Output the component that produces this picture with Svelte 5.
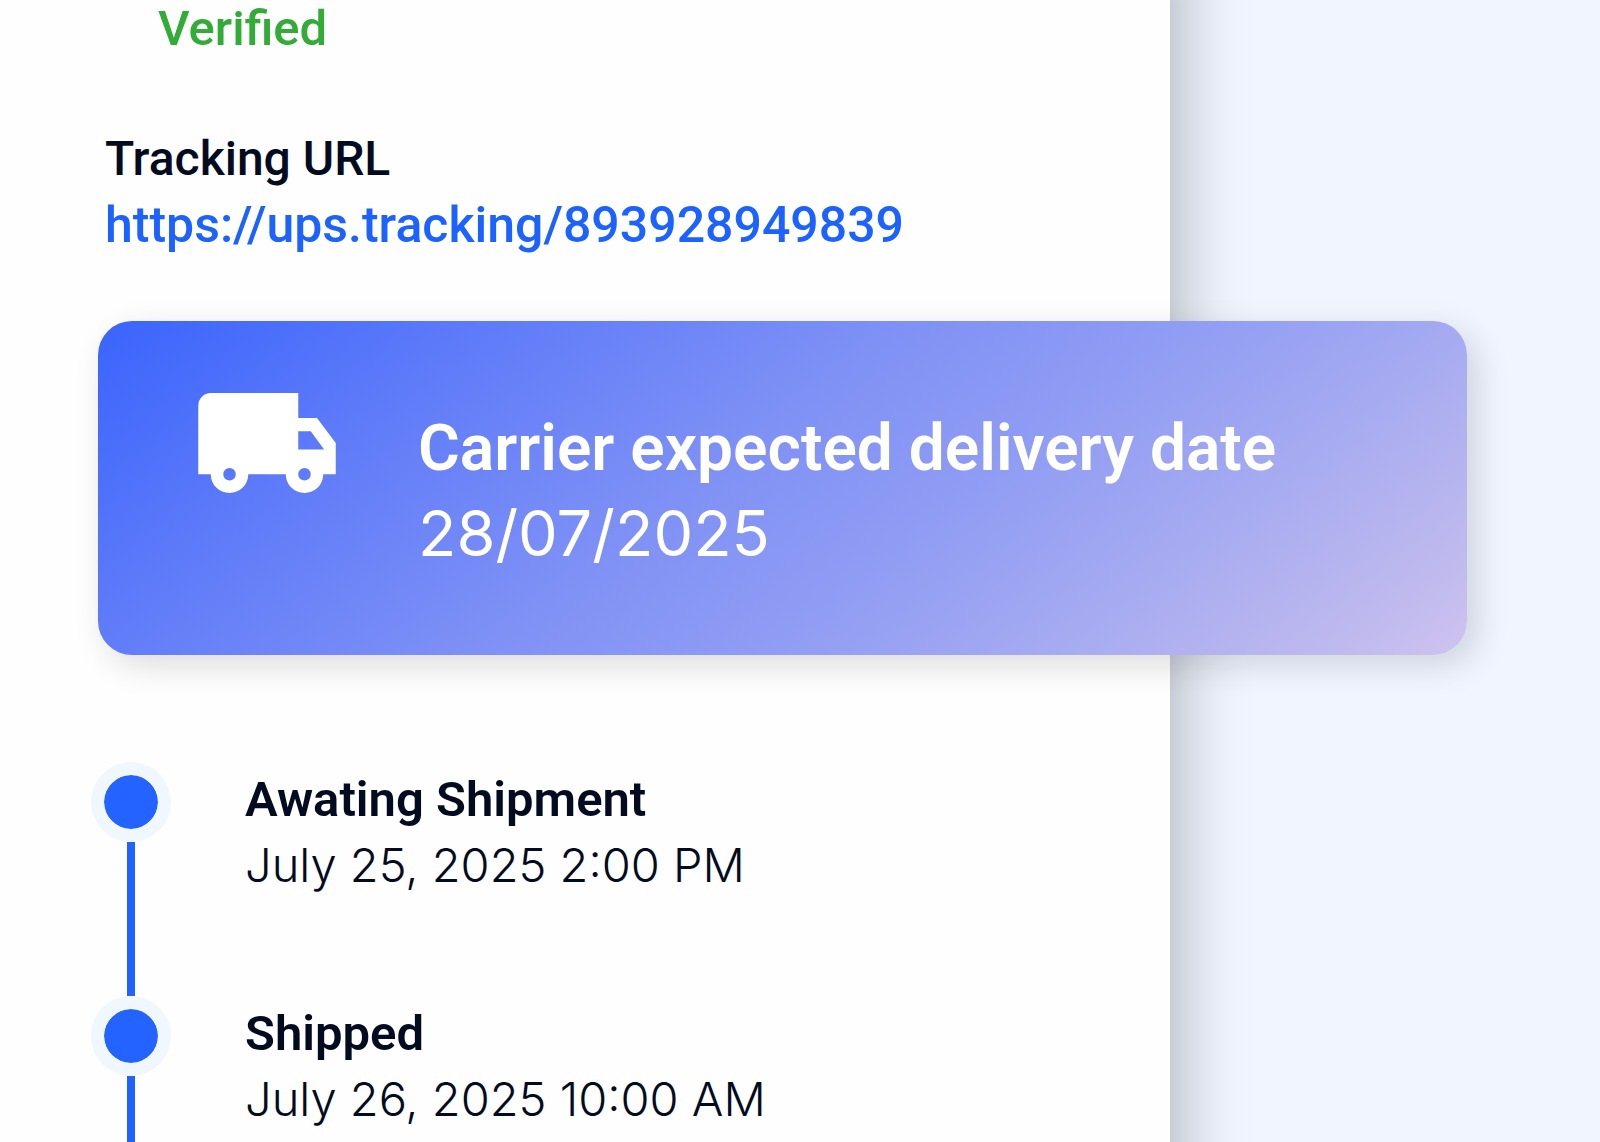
<script>
  const trackingUrl = 'https://ups.tracking/893928949839';
  const events = [
    { title: 'Awating Shipment', date: 'July 25, 2025 2:00 PM' },
    { title: 'Shipped', date: 'July 26, 2025 10:00 AM' }
  ];
</script>

<div class="page">
  <main class="panel">
    <p class="status">Verified</p>

    <section class="tracking">
      <h2>Tracking URL</h2>
      <a href={trackingUrl}>{trackingUrl}</a>
    </section>

    <section class="delivery">
      <svg class="truck" viewBox="1 4 22 16" aria-hidden="true">
        <path
          fill="currentColor"
          fill-rule="evenodd"
          d="M3 4h14v4h3l3 4v5h-2a3 3 0 0 1-6 0H9a3 3 0 0 1-6 0H1V6a2 2 0 0 1 2-2zM17 10.100v2.950h4.150L19 10.100zM6 16a1 1 0 1 0 0 2 1 1 0 0 0 0-2zM18 16a1 1 0 1 0 0 2 1 1 0 0 0 0-2z"
        />
      </svg>
      <div class="expected">
        <h1>Carrier expected delivery date</h1>
        <p>28/07/2025</p>
      </div>
    </section>

    <ol class="timeline">
      {#each events as event}
        <li>
          <div class="rail">
            <span class="dot"></span>
            <span class="line"></span>
          </div>
          <div class="event">
            <h3>{event.title}</h3>
            <p>{event.date}</p>
          </div>
        </li>
      {/each}
    </ol>
  </main>
</div>

<style>
  :global(body) {
    margin: 0;
    background: #f0f5ff;
  }

  .page {
    display: flex;
    height: 100vh;
    overflow: hidden;
    padding-right: 430px;
    box-sizing: border-box;
    background: #f0f5ff;
    color: #020b20;
    font-family: Roboto, 'Liberation Sans', sans-serif;
    font-size: 49px;
    line-height: 65px;
  }

  /* The panel runs past the top and bottom edges so its shadow stays even. */
  .panel {
    flex: 1;
    min-width: 0;
    box-sizing: border-box;
    height: max-content;
    min-height: calc(100% + 160px);
    margin-top: -80px;
    padding-top: 76px;
    background: #fefefe;
    box-shadow: 0 0 72px rgb(0 0 0 / 33%);
  }

  h1,
  h2,
  h3,
  p {
    margin: 0;
    font-size: inherit;
  }

  .status {
    padding-left: 158px;
    color: #32ab37;
    font-weight: 500;
  }

  .tracking {
    margin-top: 65px;
    padding-left: 105px;
    line-height: 66px;
  }

  h2 {
    font-weight: 500;
  }

  .tracking h2 {
    font-size: 48px;
  }

  .tracking a {
    display: block;
    color: #1b62ff;
    font-size: 50px;
    font-weight: 500;
    text-decoration: none;
  }

  .delivery {
    position: relative;
    display: flex;
    gap: 82px;
    box-sizing: border-box;
    min-height: 334px;
    margin: 63px -297px 0 98px;
    padding: 72px 100px;
    border-radius: 34px;
    background: linear-gradient(142deg, #3a64fd 0%, #5d7af9 21%, #7f91f5 45%, #8f9cf4 60%, #a5aaf1 76%, #c0baee 93%, #cfc4f0 100%);
    box-shadow: 10px 10px 34px rgb(0 0 0 / 14%);
    color: #fff;
  }

  .truck {
    flex: none;
    width: 138px;
    height: 100px;
  }

  .expected {
    padding-top: 13px;
    font-size: 64px;
    line-height: 85px;
    white-space: nowrap;
  }

  h1 {
    font-weight: 600;
  }

  .expected p {
    font-family: Inter, 'Liberation Sans', sans-serif;
    font-size: 63px;
    font-weight: 400;
  }

  .timeline {
    margin: 0;
    padding: 107px 0 0 91px;
    list-style: none;
  }

  .timeline li {
    display: flex;
    gap: 74px;
    height: 234px;
  }

  .rail {
    display: flex;
    flex-direction: column;
    align-items: center;
  }

  .dot {
    width: 54px;
    height: 54px;
    border: 13px solid #f1f7ff;
    border-radius: 50%;
    background: #2463ff;
    background-clip: padding-box;
  }

  .line {
    flex: 1;
    width: 8px;
    background: #2064ff;
  }

  .event {
    padding-top: 5px;
  }

  h3 {
    font-weight: 600;
  }

  .event p {
    font-family: Inter, 'Liberation Sans', sans-serif;
    font-size: 47px;
    font-weight: 300;
  }
</style>
